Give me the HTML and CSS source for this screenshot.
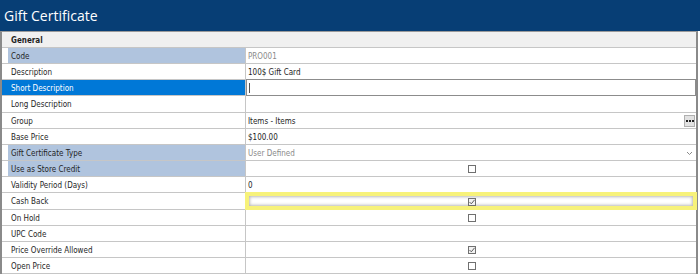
FILE: index.html
```html
<!DOCTYPE html>
<html lang="en">
<head>
  <meta charset="utf-8">
  <title>Gift Certificate</title>
  <link rel="stylesheet" href="styles.css">
</head>
<body>
  <div class="titlebar">Gift Certificate</div>

  <div class="grid">
    <div class="row category">
      <div class="label">General</div>
    </div>
    <div class="row readonly">
      <div class="indent"></div><div class="label">Code</div>
      <div class="value muted">PRO001</div>
    </div>
    <div class="row">
      <div class="indent"></div><div class="label">Description</div>
      <div class="value">100$ Gift Card</div>
    </div>
    <div class="row selected">
      <div class="indent"></div><div class="label">Short Description</div>
      <div class="value editing"><span class="caret"></span></div>
    </div>
    <div class="row tall">
      <div class="indent"></div><div class="label">Long Description</div>
      <div class="value"></div>
    </div>
    <div class="row">
      <div class="indent"></div><div class="label">Group</div>
      <div class="value">Items - Items
        <span class="dots"><svg width="8" height="2" viewBox="0 0 8 2"><rect x="0" y="0" width="2" height="2" fill="#222"/><rect x="3" y="0" width="2" height="2" fill="#222"/><rect x="6" y="0" width="2" height="2" fill="#222"/></svg></span>
      </div>
    </div>
    <div class="row">
      <div class="indent"></div><div class="label">Base Price</div>
      <div class="value">$100.00</div>
    </div>
    <div class="row readonly">
      <div class="indent"></div><div class="label">Gift Certificate Type</div>
      <div class="value muted">User Defined
        <svg class="chevron" width="7" height="5" viewBox="0 0 7 5"><polyline points="1,1 3.5,3.5 6,1" fill="none" stroke="#8a8a8a" stroke-width="1"/></svg>
      </div>
    </div>
    <div class="row readonly">
      <div class="indent"></div><div class="label">Use as Store Credit</div>
      <div class="value center"><span class="check"></span></div>
    </div>
    <div class="row">
      <div class="indent"></div><div class="label">Validity Period (Days)</div>
      <div class="value">0</div>
    </div>
    <div class="row tall">
      <div class="indent"></div><div class="label">Cash Back</div>
      <div class="value center focused">
        <span class="check on"><svg width="6" height="6" viewBox="0 0 6 6"><polyline points="0.5,3 2.3,4.8 5.6,0.8" fill="none" stroke="#5a5a5a" stroke-width="1"/></svg></span>
      </div>
    </div>
    <div class="row">
      <div class="indent"></div><div class="label">On Hold</div>
      <div class="value center"><span class="check"></span></div>
    </div>
    <div class="row">
      <div class="indent"></div><div class="label">UPC Code</div>
      <div class="value"></div>
    </div>
    <div class="row">
      <div class="indent"></div><div class="label">Price Override Allowed</div>
      <div class="value center">
        <span class="check on"><svg width="6" height="6" viewBox="0 0 6 6"><polyline points="0.5,3 2.3,4.8 5.6,0.8" fill="none" stroke="#5a5a5a" stroke-width="1"/></svg></span>
      </div>
    </div>
    <div class="row">
      <div class="indent"></div><div class="label">Open Price</div>
      <div class="value center"><span class="check"></span></div>
    </div>
  </div>
</body>
</html>
```

FILE: styles.css
```css
body {
  margin: 0;
  background: #fff;
  font-family: "DejaVu Sans Condensed", "DejaVu Sans", sans-serif;
  font-size: 8px;
  color: #1e1e1e;
}
.titlebar {
  height: 31px;
  line-height: 31px;
  padding-left: 4px;
  background: #073e75;
  color: #fff;
  font-family: "Open Sans", sans-serif;
  font-size: 14px;
}
.grid {
  width: 694px;
  border-top: 1px solid #9a9a9a;
  border-left: 2px solid #8a8a8a;
  border-right: 2px solid #8a8a8a;
}
.row {
  display: flex;
  height: 15px;
  line-height: 15px;
  border-bottom: 1px solid #c6c6c6;
}
.row.tall {
  height: 16px;
  line-height: 16px;
}
.indent {
  width: 6px;
  flex: none;
  background: #fff;
}
.label {
  width: 234px;
  flex: none;
  padding-left: 3px;
  padding-top: 1px;
  border-right: 1px solid #c6c6c6;
  white-space: nowrap;
}
.value {
  flex: 1;
  display: flex;
  align-items: center;
  padding: 1px 0 0 2px;
  position: relative;
}
.category {
  background: #f0f0f0;
}
.category .label {
  width: auto;
  padding-left: 9px;
  font-weight: bold;
  border-right: none;
}
.readonly .label {
  background: #b0c4de;
}
.selected .indent,
.selected .label {
  background: #0078d7;
  color: #fff;
}
.muted {
  color: #8a8a8a;
}
.center {
  justify-content: center;
}
.editing {
  border: 1px solid #8c8c8c;
  margin-top: -1px;
  height: 15px;
  padding-top: 0;
}
.caret {
  width: 1px;
  height: 10px;
  background: #555;
}
.dots {
  margin-left: auto;
  margin-right: 1px;
  width: 11px;
  height: 12px;
  box-sizing: border-box;
  display: flex;
  align-items: center;
  justify-content: center;
  background: #e2e2e2;
  border: 1px solid #b0b0b0;
}
.chevron {
  margin-left: auto;
  margin-right: 3px;
}
.check {
  width: 8px;
  height: 8px;
  box-sizing: border-box;
  border: 1px solid #707070;
  background: #fff;
  display: flex;
  align-items: center;
  justify-content: center;
}
.check.on {
  background: #f2f2f2;
}
.focused {
  outline: 1px solid #f7f27a;
  box-shadow: inset 0 0 0 3px #f7f27a, inset 0 0 3px 4px rgba(100, 100, 100, 0.45);
  z-index: 1;
}
```
